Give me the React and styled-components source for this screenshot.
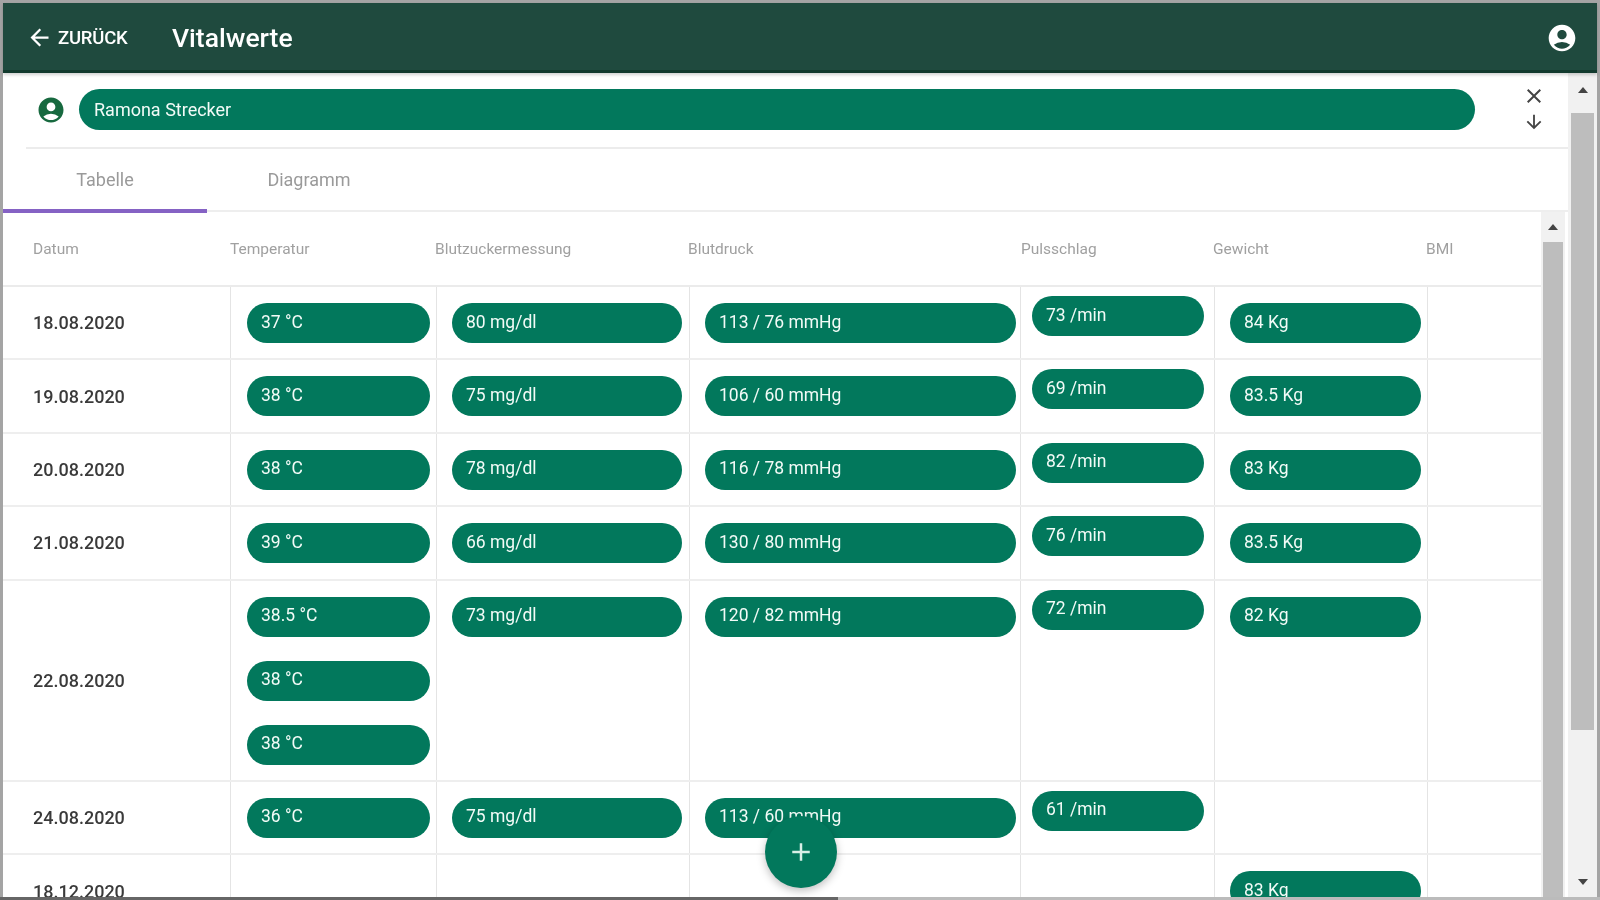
import React from "react";
import styled, { createGlobalStyle } from "styled-components";
import { MdAccountCircle, MdAdd, MdArrowBack, MdArrowDownward, MdClose } from "react-icons/md";

const Global = createGlobalStyle`
  html, body { margin: 0; padding: 0; height: 100%; overflow: hidden; background: #9a9a9a; }
  * { box-sizing: border-box; }
`;

const GREEN = "#02785c";

const Page = styled.div`
  position: relative;
  width: 1600px;
  height: 900px;
  padding: 3px;
  display: flex;
  flex-direction: column;
  overflow: hidden;
  font-family: Roboto, "Liberation Sans", sans-serif;
  background: linear-gradient(to right, #666 0, #666 838px, #bbb 838px, #bbb 100%);
  background-size: 100% 3px;
  background-position: bottom;
  background-repeat: no-repeat;
  background-color: #a4a4a4;
  filter: blur(0.7px);
`;

const Header = styled.header`
  position: relative;
  z-index: 1;
  height: 70px;
  flex: none;
  display: flex;
  align-items: center;
  background: #1f4a3e;
  border-bottom: 3px solid #123a2e;
  box-shadow: 0 2px 3px rgba(0, 0, 0, 0.18);
  color: #fff;
  padding: 2px 19px 0 23px;
`;

const BackButton = styled.div`
  display: flex;
  align-items: center;
  gap: 5px;
  width: 146px;
  font-size: 18.5px;
  font-weight: 500;
  letter-spacing: -0.2px;
  svg { flex: none; }
`;

const Title = styled.h1`
  margin: 0;
  flex: 1;
  font-size: 26.5px;
  font-weight: 500;
`;

const Body = styled.div`
  flex: 1;
  min-height: 0;
  display: flex;
  background: #fff;
`;

const Main = styled.main`
  flex: 1;
  min-width: 0;
  display: flex;
  flex-direction: column;
`;

const PatientRow = styled.div`
  flex: none;
  height: 76px;
  margin-left: 23px;
  padding: 16px 0 0 10px;
  display: flex;
  align-items: flex-start;
  border-bottom: 2px solid #ececec;
`;

const PatientIcon = styled.div`
  width: 36px;
  height: 41px;
  flex: none;
  display: flex;
  align-items: center;
  color: #17693f;
`;

const PatientPill = styled.div`
  width: 1396px;
  height: 41px;
  flex: none;
  margin-left: 7px;
  padding-left: 15px;
  border-radius: 21px;
  display: flex;
  align-items: center;
  background: ${GREEN};
  color: #f2fbf7;
  font-size: 18px;
`;

const PatientActions = styled.div`
  width: 34px;
  margin: -5px 0 0 42px;
  display: flex;
  flex-direction: column;
  align-items: center;
  color: #444;
  svg { display: block; margin-bottom: 3px; }
`;

const Tabs = styled.nav`
  flex: none;
  height: 63px;
  display: flex;
  border-bottom: 2px solid #eee;
`;

const Tab = styled.div`
  width: 204px;
  height: 64px;
  display: flex;
  align-items: center;
  justify-content: center;
  font-size: 18px;
  color: #9a9a9a;
  border-bottom: 4px solid ${(p) => (p.$active ? "#8562c4" : "transparent")};
`;

const TablePanel = styled.div`
  flex: 1;
  min-height: 0;
  display: flex;
  padding-right: 3px;
`;

const TableArea = styled.div`
  flex: 1;
  min-width: 0;
  overflow: hidden;
`;

const GRID = "227px 206px 253px 331px 194px 213px 111px";

const HeadRow = styled.div`
  display: grid;
  grid-template-columns: ${GRID};
  height: 75px;
  align-items: center;
  border-bottom: 2px solid #ebebeb;
`;

const HeadCell = styled.div`
  font-size: 15.5px;
  color: #a0a0a0;
  margin-left: ${(p) => p.$indent}px;
`;

const Row = styled.div`
  display: grid;
  grid-template-columns: ${GRID};
  border-bottom: 2px solid #eee;
`;

const DateCell = styled.div`
  display: flex;
  align-items: center;
  padding-left: 30px;
  font-size: 18px;
  font-weight: 500;
  color: #3a3a3a;
`;

const Cell = styled.div`
  border-left: 1px solid #e4e4e4;
  display: flex;
  flex-direction: column;
  gap: 24px;
  padding: ${(p) => (p.$raised ? "9px" : "16px")} ${(p) => p.$right}px
    ${(p) => (p.$raised ? "22.4px" : "15.4px")} ${(p) => p.$left}px;
`;

const Pill = styled.div`
  height: 40px;
  border-radius: 20px;
  padding: 0 0 3px 14px;
  display: flex;
  align-items: center;
  background: ${GREEN};
  color: #f2fbf7;
  font-size: 17.5px;
`;

const ScrollTrack = styled.div`
  flex: none;
  width: ${(p) => p.$width}px;
  display: flex;
  flex-direction: column;
  align-items: center;
  background: ${(p) => p.$bg};
`;

const ScrollArrow = styled.div`
  flex: none;
  height: ${(p) => p.$height}px;
  padding-bottom: ${(p) => p.$lift || 0}px;
  width: 100%;
  display: flex;
  align-items: center;
  justify-content: center;
  &::after {
    content: "";
    border-left: 5px solid transparent;
    border-right: 5px solid transparent;
    ${(p) => (p.$down ? "border-top" : "border-bottom")}: 6px solid #444;
  }
`;

const ScrollThumb = styled.div`
  width: ${(p) => p.$width}px;
  height: ${(p) => p.$height}px;
  flex: ${(p) => (p.$fill ? "1" : "none")};
  background: #bdbdbd;
`;

const ScrollSpace = styled.div`
  flex: 1;
`;

const Fab = styled.button`
  position: absolute;
  left: 765px;
  top: 816px;
  width: 72px;
  height: 72px;
  border: 0;
  padding: 0;
  border-radius: 50%;
  display: flex;
  align-items: center;
  justify-content: center;
  background: ${GREEN};
  color: #d8efe6;
  box-shadow: 0 3px 8px rgba(0, 0, 0, 0.25);
`;

const heads = [
  ["Datum", 30], ["Temperatur", 0], ["Blutzuckermessung", -1], ["Blutdruck", -1],
  ["Pulsschlag", 1], ["Gewicht", -1], ["BMI", -1],
];

const rows = [
  { d: "18.08.2020", t: ["37 °C"], s: "80 mg/dl", b: "113 / 76 mmHg", p: "73 /min", w: "84 Kg" },
  { d: "19.08.2020", t: ["38 °C"], s: "75 mg/dl", b: "106 / 60 mmHg", p: "69 /min", w: "83.5 Kg" },
  { d: "20.08.2020", t: ["38 °C"], s: "78 mg/dl", b: "116 / 78 mmHg", p: "82 /min", w: "83 Kg" },
  { d: "21.08.2020", t: ["39 °C"], s: "66 mg/dl", b: "130 / 80 mmHg", p: "76 /min", w: "83.5 Kg" },
  { d: "22.08.2020", t: ["38.5 °C", "38 °C", "38 °C"], s: "73 mg/dl", b: "120 / 82 mmHg", p: "72 /min", w: "82 Kg" },
  { d: "24.08.2020", t: ["36 °C"], s: "75 mg/dl", b: "113 / 60 mmHg", p: "61 /min" },
  { d: "18.12.2020", t: [], w: "83 Kg" },
];

export default function App() {
  return (
    <Page>
      <Global />
      <Header>
        <BackButton><MdArrowBack size={27} />ZURÜCK</BackButton>
        <Title>Vitalwerte</Title>
        <MdAccountCircle size={32} />
      </Header>
      <Body>
        <Main>
          <PatientRow>
            <PatientIcon><MdAccountCircle size={30} /></PatientIcon>
            <PatientPill>Ramona Strecker</PatientPill>
            <PatientActions>
              <MdClose size={24} />
              <MdArrowDownward size={22} />
            </PatientActions>
          </PatientRow>
          <Tabs>
            <Tab $active>Tabelle</Tab>
            <Tab>Diagramm</Tab>
          </Tabs>
          <TablePanel>
            <TableArea>
              <HeadRow>
                {heads.map(([h, i]) => <HeadCell key={h} $indent={i}>{h}</HeadCell>)}
              </HeadRow>
              {rows.map((r) => (
                <Row key={r.d}>
                  <DateCell>{r.d}</DateCell>
                  <Cell $left={16} $right={6}>{r.t.map((t, i) => <Pill key={i}>{t}</Pill>)}</Cell>
                  <Cell $left={15} $right={7}>{r.s && <Pill>{r.s}</Pill>}</Cell>
                  <Cell $left={15} $right={4}>{r.b && <Pill>{r.b}</Pill>}</Cell>
                  <Cell $raised $left={11} $right={10}>{r.p && <Pill>{r.p}</Pill>}</Cell>
                  <Cell $left={15} $right={6}>{r.w && <Pill>{r.w}</Pill>}</Cell>
                  <Cell $left={15} $right={6} />
                </Row>
              ))}
            </TableArea>
            <ScrollTrack $width={24} $bg="#f1f1f1">
              <ScrollArrow $height={30} />
              <ScrollThumb $width={20} $fill />
            </ScrollTrack>
          </TablePanel>
        </Main>
        <ScrollTrack $width={29} $bg="#f1f1f1">
          <ScrollArrow $height={40} $lift={7} />
          <ScrollThumb $width={23} $height={617} />
          <ScrollSpace />
          <ScrollArrow $height={30} $down />
        </ScrollTrack>
      </Body>
      <Fab aria-label="Hinzufügen"><MdAdd size={30} /></Fab>
    </Page>
  );
}
